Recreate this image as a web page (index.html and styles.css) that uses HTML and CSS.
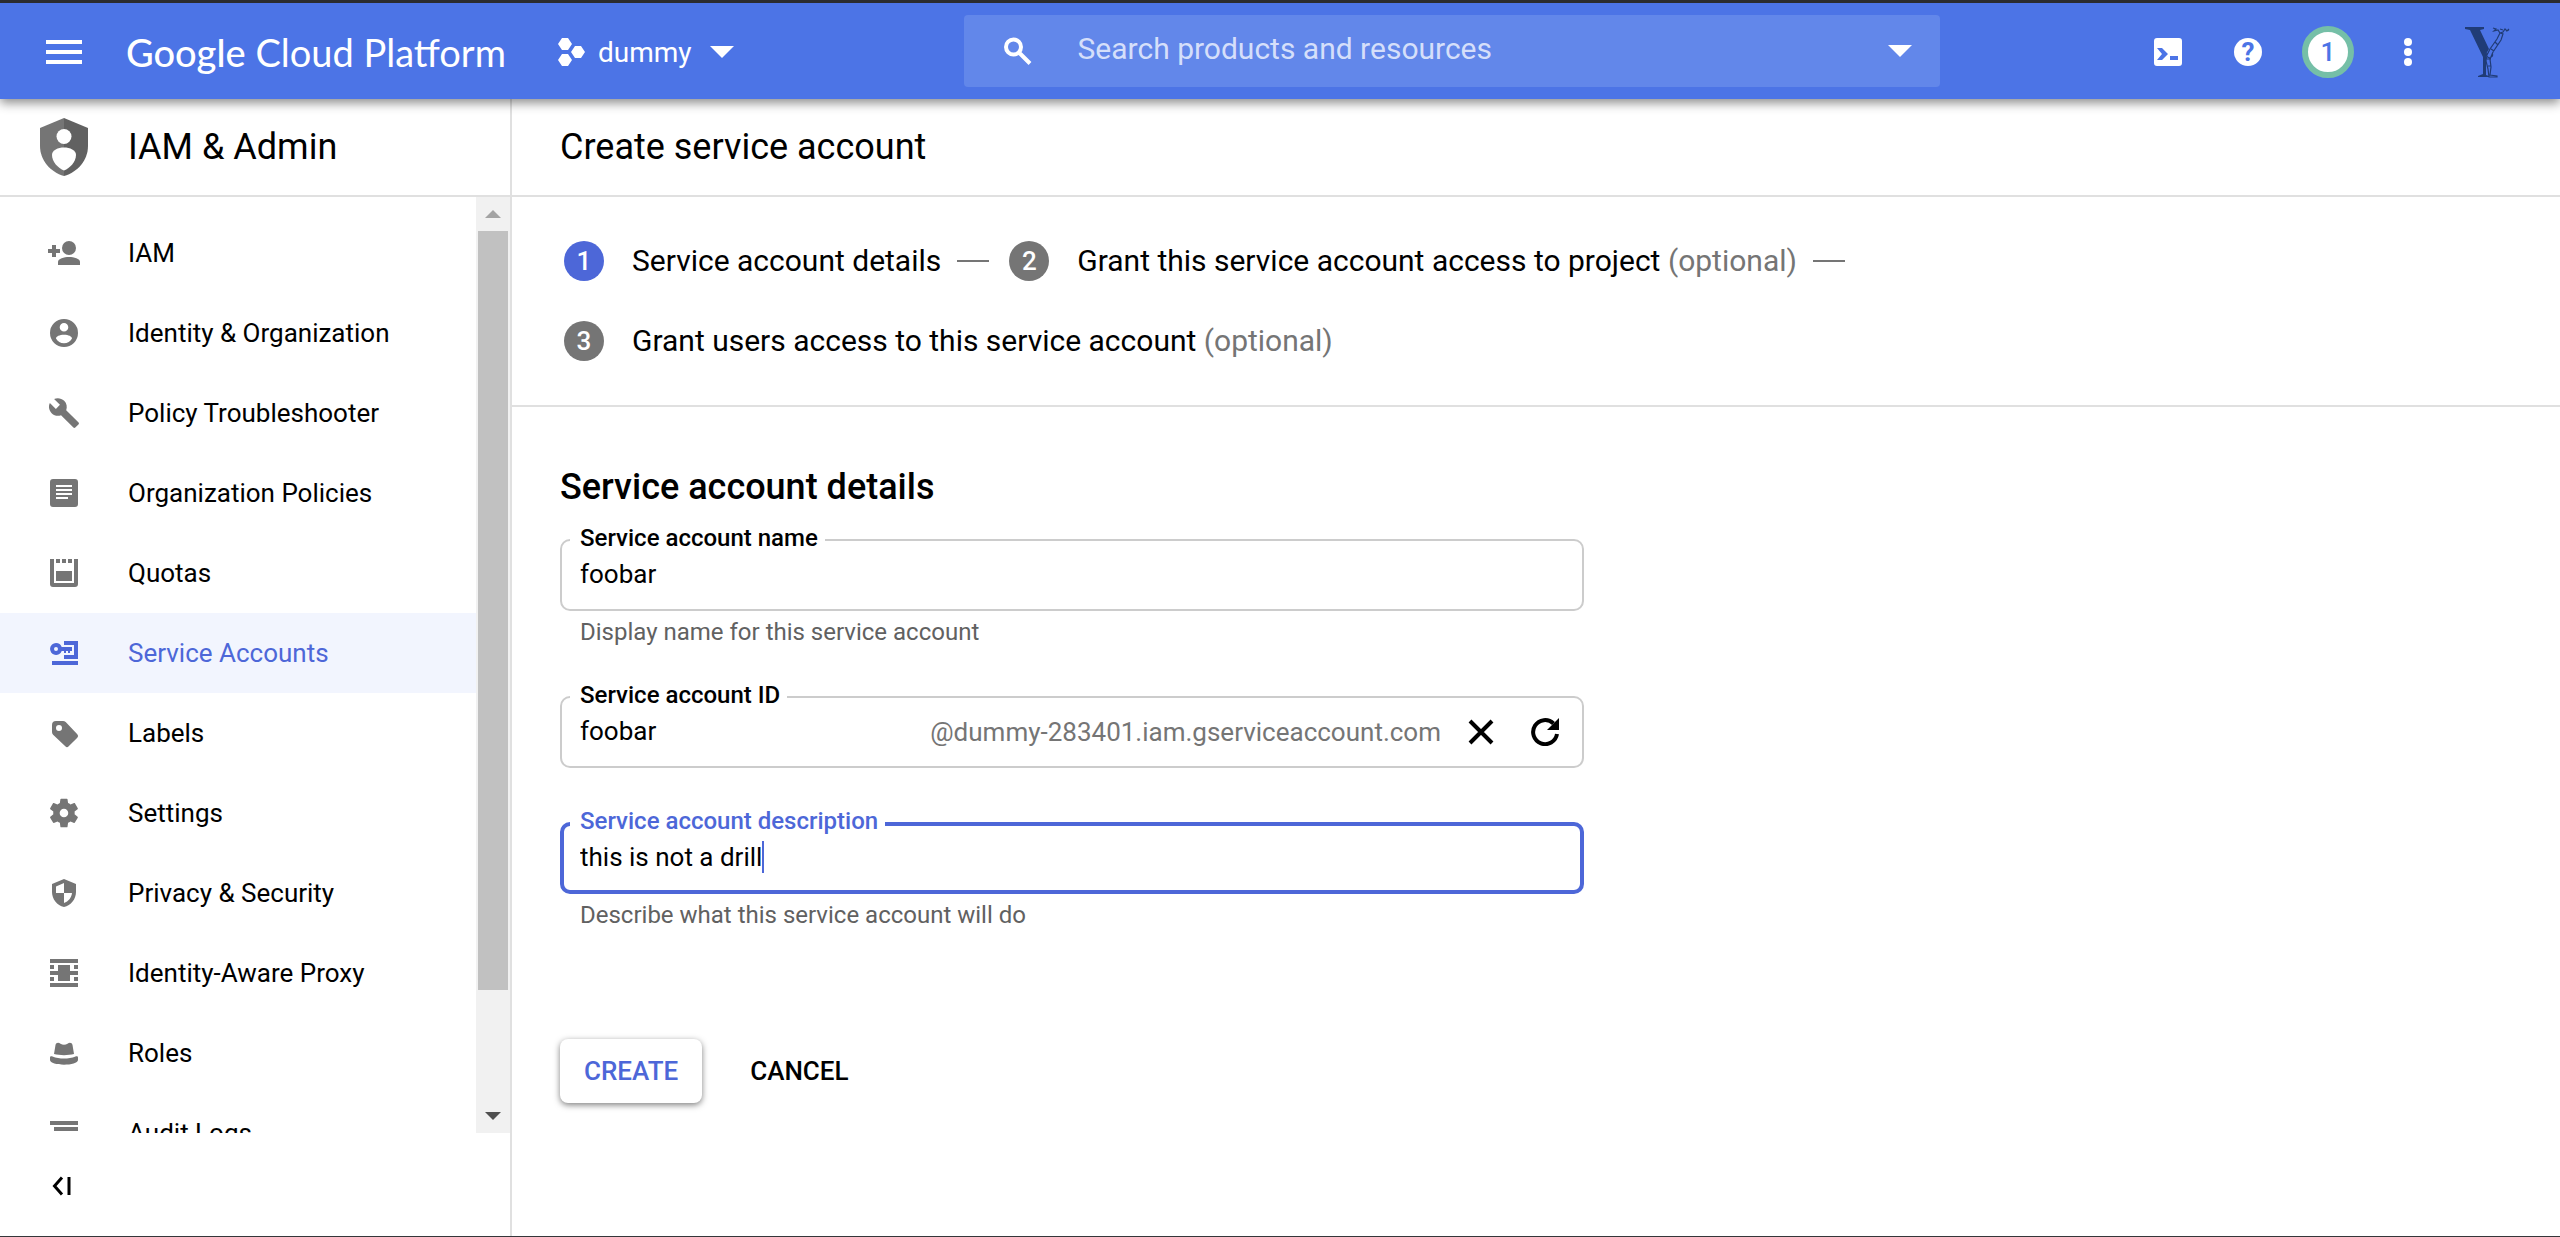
FILE: index.html
```html
<!DOCTYPE html>
<html lang="en">
<head>
<meta charset="utf-8">
<meta name="viewport" content="width=device-width, initial-scale=1">
<title>Create service account – IAM &amp; Admin</title>
<link rel="stylesheet" href="styles.css">
</head>
<body>
<header class="topbar">
  <button class="icon-button menu-button" type="button" aria-label="Main menu">
    <svg width="36" height="24" viewBox="0 0 36 24"><path d="M0 0h36v4H0zM0 10h36v4H0zM0 20h36v4H0z"/></svg>
  </button>
  <a class="brand" href="#"><span class="brand-name">Google</span> Cloud Platform</a>
  <button class="project" type="button">
    <svg width="28" height="28" viewBox="0 0 28 28"><path d="M4 0h6l4 6-4 6H4L0 6zM17 8h6l4 6-4 6h-6l-4-6zM4 16h6l4 6-4 6H4l-4-6z"/></svg>
    <span class="project-name">dummy</span>
    <svg width="24" height="12" viewBox="0 0 24 12"><path d="M0 0h24L12 12z"/></svg>
  </button>
  <form class="search" role="search">
    <svg width="28" height="28" viewBox="0 0 28 28"><path fill="none" stroke="currentColor" stroke-width="4" d="M17 10a7.500 7.500 0 1 1-15 0 7.500 7.500 0 0 1 15 0zM15 15.500l11 11"/></svg>
    <input class="search-input" type="search" aria-label="Search products and resources" placeholder="Search products and resources">
    <svg width="24" height="12" viewBox="0 0 24 12"><path d="M0 0h24L12 12z"/></svg>
  </form>
  <div class="tools">
    <button class="icon-button" type="button" aria-label="Activate Cloud Shell">
      <svg width="28" height="28" viewBox="0 0 28 28"><path fill-rule="evenodd" d="M3 0h22a3 3 0 0 1 3 3v22a3 3 0 0 1-3 3H3a3 3 0 0 1-3-3V3a3 3 0 0 1 3-3zM3 10l5 6-5 6h5l6-6-6-6zM16 18v4h8v-4z"/></svg>
    </button>
    <button class="icon-button" type="button" aria-label="Help"><span class="help">?</span></button>
    <button class="icon-button" type="button" aria-label="1 notification"><span class="count">1</span></button>
    <button class="icon-button" type="button" aria-label="More">
      <svg width="8" height="28" viewBox="0 0 8 28"><circle cx="4" cy="4" r="4"/><circle cx="4" cy="14" r="4"/><circle cx="4" cy="24" r="4"/></svg>
    </button>
    <button class="icon-button avatar" type="button" aria-label="Account">
      <svg width="48" height="52" viewBox="0 0 48 52"><path d="M1 1h19v2l-4 1 9 19-3 5v21l3 1v1H14v-1l5-2V31L6 4 1 3z"/><path fill="none" stroke="currentColor" stroke-width="1.200" d="M23 29l3-6 7-10 3-6 3 1-2 6-8 12-3 7 1 8-1 8 7 1v1h-8l-1-8-2-8zM23 27a3 3 0 1 0 5 0M29 2l3 1-2 2 4-1 2 3 3-1 2-3 2 2 2-2M36 3l3 1M42 5l3-1M31 16l3 3M27 23l3 2M23 33h4M24 40h3"/></svg>
    </button>
  </div>
</header>

<div class="shell">
  <aside class="sidebar">
    <div class="section-title">
      <svg class="section-icon" width="48" height="58" viewBox="0 0 48 58"><path fill="#757575" d="M24 0 0 10v18c0 14 10 26 24 30z"/><path fill="#616161" d="M24 0l24 10v18c0 14-10 26-24 30z"/><circle cx="24" cy="18.500" r="7.500" fill="#fff"/><path fill="#fff" d="M12 37c0-5 6-7.500 12-7.500S36 32 36 37c0 7-6 13-12 15.500C18 50 12 44 12 37z"/></svg>
      IAM &amp; Admin
    </div>
    <div class="nav-area">
      <nav class="nav" aria-label="IAM and Admin">
        <a class="nav-item" href="#"><svg class="nav-icon" viewBox="0 0 36 36"><path d="M2 14h4v-4h4v4h4v4h-4v4H6v-4H2z"/><circle cx="23" cy="13" r="7"/><path d="M12 30v-3c0-3.500 6-5 11-5s11 1.500 11 5v3z"/></svg>IAM</a>
        <a class="nav-item" href="#"><svg class="nav-icon" viewBox="0 0 36 36"><path fill-rule="evenodd" d="M18 4a14 14 0 1 1 0 28 14 14 0 0 1 0-28zm0 4a4.300 4.300 0 1 0 0 8.600A4.300 4.300 0 0 0 18 8zm0 11.800c-4.500 0-8 1.700-8 3.700 1.600 3 4.500 4.800 8 4.800s6.400-1.800 8-4.800c0-2-3.500-3.700-8-3.700z"/></svg>Identity &amp; Organization</a>
        <a class="nav-item" href="#"><svg class="nav-icon" viewBox="0 0 36 36"><path transform="translate(1.700 1.700) scale(1.360)" d="M22.700 19l-9.100-9.100c.9-2.300.4-5-1.500-6.900-2-2-5-2.400-7.400-1.300L9 6 6 9 1.600 4.700C.4 7.100.9 10.100 2.900 12.100c1.900 1.900 4.600 2.400 6.900 1.500l9.100 9.100c.4.4 1 .4 1.400 0l2.300-2.300c.5-.4.5-1.100.1-1.400z"/></svg>Policy Troubleshooter</a>
        <a class="nav-item" href="#"><svg class="nav-icon" viewBox="0 0 36 36"><path fill-rule="evenodd" d="M7 4h22a3 3 0 0 1 3 3v22a3 3 0 0 1-3 3H7a3 3 0 0 1-3-3V7a3 3 0 0 1 3-3zm3 6v2h16v-2zm0 4v2h16v-2zm0 4v2h16v-2zm0 4v2h12v-2z"/></svg>Organization Policies</a>
        <a class="nav-item" href="#"><svg class="nav-icon" viewBox="0 0 36 36"><path d="M4 4h4v24h20V4h4v25a3 3 0 0 1-3 3H7a3 3 0 0 1-3-3zM10 4h4v4h-4zM16 4h4v4h-4zM22 4h4v4h-4zM10 16h16v10H10z"/></svg>Quotas</a>
        <a class="nav-item nav-item-active" href="#" aria-current="page"><svg class="nav-icon" viewBox="0 0 36 36"><path fill-rule="evenodd" d="M10 8a6 6 0 0 1 5.700 4H26v4h-2v2h-2v-2h-2v2h-2v-2h-2.300A6 6 0 1 1 10 8zm0 4a2 2 0 1 0 0 4 2 2 0 0 0 0-4z"/><path d="M18 6h14v18H18v-4h10V10H18zM6 26h26v4H6z"/></svg>Service Accounts</a>
        <a class="nav-item" href="#"><svg class="nav-icon" viewBox="0 0 36 36"><path fill-rule="evenodd" d="M10 6h7c1 0 2 .4 2.700 1.100l11.600 12.200a2.400 2.400 0 0 1 0 3.400l-8.600 8.600a2.400 2.400 0 0 1-3.400 0L7.100 19.700A4 4 0 0 1 6 17v-7a4 4 0 0 1 4-4zm3 4a3 3 0 1 0 0 6 3 3 0 0 0 0-6z"/></svg>Labels</a>
        <a class="nav-item" href="#"><svg class="nav-icon" viewBox="0 0 36 36"><path transform="translate(.8 .8) scale(1.430)" fill-rule="evenodd" d="M19.430 12.980c.04-.32.07-.64.07-.98s-.03-.66-.07-.98l2.110-1.650c.19-.15.24-.42.12-.64l-2-3.460c-.12-.22-.39-.3-.61-.22l-2.490 1c-.52-.4-1.080-.73-1.690-.98l-.38-2.650C14.460 2.180 14.250 2 14 2h-4c-.25 0-.46.18-.49.42l-.38 2.650c-.61.25-1.170.59-1.690.98l-2.490-1c-.23-.09-.49 0-.61.22l-2 3.460c-.13.22-.07.49.12.64l2.110 1.650c-.04.32-.07.65-.07.98s.03.66.07.98l-2.110 1.650c-.19.15-.24.42-.12.64l2 3.460c.12.22.39.3.61.22l2.490-1c.52.4 1.080.73 1.690.98l.38 2.650c.03.24.24.42.49.42h4c.25 0 .46-.18.49-.42l.38-2.650c.61-.25 1.170-.59 1.690-.98l2.490 1c.23.09.49 0 .61-.22l2-3.460c.12-.22.07-.49-.12-.64zM12 9a3 3 0 1 0 0 6 3 3 0 0 0 0-6z"/></svg>Settings</a>
        <a class="nav-item" href="#"><svg class="nav-icon" viewBox="0 0 36 36"><path fill-rule="evenodd" d="M18 4l12 5v8c0 7-5 13.500-12 15C11 30.500 6 24 6 17V9zM18 8l-8 3.500V18h8zM18 18v10c4.500-1.500 7.500-5.500 8-10z"/></svg>Privacy &amp; Security</a>
        <a class="nav-item" href="#"><svg class="nav-icon" viewBox="0 0 36 36"><path d="M4 4h28v4H4zM4 28h28v4H4zM12 10h12v6h8v4h-8v6H12v-6H4v-4h8zM4 10h4v4H4zM28 10h4v4h-4zM4 22h4v4H4zM28 22h4v4h-4z"/></svg>Identity-Aware Proxy</a>
        <a class="nav-item" href="#"><svg class="nav-icon" viewBox="0 0 36 36"><path d="M8 19l1.500-9c.5-2.500 3-3 5-1.300 2 1.500 5 1.500 7 0 2-1.700 4.500-1.200 5 1.300l1.500 9c-6 1.500-14 1.500-20 0zM4 22.500c0-1 1-1.500 2.500-1 7 2.700 16 2.700 23 0 1.500-.5 2.500 0 2.500 1V25c0 3-7 4.700-14 4.700S4 28 4 25z"/></svg>Roles</a>
        <a class="nav-item" href="#"><svg class="nav-icon" viewBox="0 0 36 36"><path d="M4 6h28v4H4zM8 12h24v4H8zM4 20h28v4H4zM8 26h24v4H8z"/></svg>Audit Logs</a>
      </nav>
      <div class="scrollbar" aria-hidden="true">
        <span class="scroll-arrow"><svg width="16" height="8" viewBox="0 0 16 8"><path fill="#a3a3a3" d="M0 8h16L8 0z"/></svg></span>
        <span class="scroll-track"><span class="scroll-thumb"></span></span>
        <span class="scroll-arrow"><svg width="16" height="8" viewBox="0 0 16 8"><path fill="#505050" d="M0 0h16L8 8z"/></svg></span>
      </div>
    </div>
    <div class="sidebar-footer">
      <button class="icon-button" type="button" aria-label="Collapse menu">
        <svg width="20" height="20" viewBox="0 0 20 20"><path fill="none" stroke="currentColor" stroke-width="3" d="M10 1.500L2.500 10l7.500 8.500M17 1v18"/></svg>
      </button>
    </div>
  </aside>

  <main class="content">
    <h1 class="page-title">Create service account</h1>
    <ol class="steps">
      <li class="step step-current"><span class="step-number">1</span><span class="step-label">Service account details</span></li>
      <li class="step"><span class="step-number">2</span><span class="step-label">Grant this service account access to project <span class="optional">(optional)</span></span></li>
      <li class="step"><span class="step-number">3</span><span class="step-label">Grant users access to this service account <span class="optional">(optional)</span></span></li>
    </ol>
    <form class="details">
      <h2 class="details-title">Service account details</h2>
      <div class="field">
        <div class="control">
          <label class="field-label" for="account-name">Service account name</label>
          <input class="field-input" id="account-name" type="text" value="foobar">
        </div>
        <p class="hint">Display name for this service account</p>
      </div>
      <div class="field">
        <div class="control">
          <label class="field-label" for="account-id">Service account ID</label>
          <input class="field-input" id="account-id" type="text" value="foobar">
          <span class="suffix">@dummy-283401.iam.gserviceaccount.com</span>
          <button class="field-button" type="button" aria-label="Clear">
            <svg width="26" height="26" viewBox="0 0 26 26"><path fill="none" stroke="currentColor" stroke-width="4" d="M2 2l22 22M24 2L2 24"/></svg>
          </button>
          <button class="field-button" type="button" aria-label="Generate a new ID">
            <svg width="28" height="28" viewBox="0 0 28 28"><path fill="none" stroke="currentColor" stroke-width="4" d="M26 16a12 12 0 1 1-3.500-10.500"/><path d="M28 0v12H16z"/></svg>
          </button>
        </div>
      </div>
      <div class="field">
        <div class="control control-focused">
          <label class="field-label" for="account-description">Service account description</label>
          <input class="field-input" id="account-description" type="text" value="this is not a drill">
          <span class="caret"></span>
        </div>
        <p class="hint">Describe what this service account will do</p>
      </div>
      <div class="actions">
        <button class="button button-raised" type="submit">CREATE</button>
        <button class="button" type="button">CANCEL</button>
      </div>
    </form>
  </main>
</div>
</body>
</html>
```
FILE: styles.css
```css
:root {
  --bar: #4c74e6;
  --accent: #4d67d8;
  --line: #e0e0e0;
  --muted: #757575;
}

* {
  box-sizing: border-box;
}

body {
  display: flex;
  flex-direction: column;
  height: 100vh;
  margin: 0;
  border-top: 3px solid #2b2c2f;
  border-bottom: 1px solid #35363a;
  background: #fff;
  color: #000;
  font: 26px/32px Roboto, "Liberation Sans", sans-serif;
}

button,
input {
  border: 0;
  padding: 0;
  background: none;
  color: inherit;
  font: inherit;
  outline: 0;
}

svg {
  display: block;
  flex: none;
  fill: currentColor;
}

a {
  color: inherit;
  text-decoration: none;
}

.topbar {
  position: relative;
  z-index: 1;
  display: flex;
  flex: none;
  align-items: center;
  height: 96px;
  padding: 2px 32px 0 24px;
  background: var(--bar);
  box-shadow: 0 4px 10px rgba(0, 0, 0, .45);
  color: #fff;
}

.icon-button {
  display: flex;
  flex: none;
  align-items: center;
  justify-content: center;
  width: 80px;
  height: 80px;
}

.brand {
  margin-left: 22px;
  font: 38px/48px Lato, sans-serif;
  white-space: nowrap;
}

.brand-name {
  font-weight: 500;
}

.project {
  display: flex;
  align-items: center;
  gap: 12px;
  margin-left: 52px;
  font-size: 28px;
}

.project-name {
  margin-right: 6px;
  padding-top: 2px;
}

.search {
  display: flex;
  flex: 0 1 976px;
  align-items: center;
  height: 72px;
  margin: 0 auto 2px 230px;
  padding: 0 28px 0 40px;
  border-radius: 4px;
  background: #6287ea;
}

.search-input {
  flex: 1;
  min-width: 0;
  margin-left: 46px;
  padding-bottom: 4px;
  font-size: 30px;
}

.search-input::placeholder {
  color: #d5dffa;
  opacity: 1;
}

.tools {
  display: flex;
}

.help {
  width: 28px;
  height: 28px;
  border-radius: 50%;
  background: #fff;
  color: var(--bar);
  font-size: 26px;
  font-weight: 700;
  line-height: 28px;
}

.count {
  width: 52px;
  height: 52px;
  border: 6px solid #75bfa7;
  border-radius: 50%;
  background: #fff;
  color: var(--bar);
  font-weight: 500;
  line-height: 40px;
}

.avatar {
  color: #203c77;
}

.shell {
  display: flex;
  flex: 1;
  min-height: 0;
}

.sidebar {
  display: flex;
  flex: 0 0 512px;
  flex-direction: column;
  border-right: 2px solid var(--line);
}

.section-title,
.page-title {
  display: flex;
  flex: none;
  align-items: center;
  height: 98px;
  margin: 0;
  border-bottom: 2px solid var(--line);
  font-size: 36px;
  font-weight: 400;
}

.section-title {
  gap: 40px;
  padding-left: 40px;
}

.page-title {
  padding-left: 48px;
}

.nav-area {
  display: flex;
  flex: 1;
  min-height: 0;
}

.nav {
  flex: 1;
  padding-top: 16px;
  overflow: hidden;
}

.nav-item {
  display: flex;
  align-items: center;
  gap: 46px;
  height: 80px;
  padding-left: 46px;
}

.nav-icon {
  width: 36px;
  height: 36px;
  color: var(--muted);
}

.nav-item-active,
.nav-item-active .nav-icon {
  color: var(--accent);
}

.nav-item-active {
  background: #f2f5fe;
}

.scrollbar {
  display: flex;
  flex: 0 0 34px;
  flex-direction: column;
  background: #f1f1f1;
}

.scroll-arrow {
  display: flex;
  flex: 0 0 34px;
  align-items: center;
  justify-content: center;
}

.scroll-track {
  flex: 1;
  padding: 0 2px;
}

.scroll-thumb {
  display: block;
  height: 87.4%;
  background: #c1c1c1;
}

.sidebar-footer {
  flex: none;
  padding: 13px 0 10px 22px;
}

.content {
  flex: 1;
  min-width: 0;
  overflow: hidden;
}

.steps {
  display: flex;
  flex-wrap: wrap;
  margin: 0;
  padding: 24px 0 24px 52px;
  border-bottom: 2px solid var(--line);
  list-style: none;
}

.step {
  display: flex;
  align-items: center;
  height: 80px;
  font-size: 30px;
}

.step-number {
  width: 40px;
  height: 40px;
  margin-right: 28px;
  border-radius: 50%;
  background: var(--muted);
  color: #fff;
  font-size: 26px;
  font-weight: 500;
  line-height: 40px;
  text-align: center;
}

.step-current .step-number {
  background: var(--accent);
}

.step:not(:last-child)::after {
  width: 32px;
  height: 2px;
  margin: 0 20px 0 16px;
  background: var(--muted);
  content: "";
}

.optional {
  color: var(--muted);
}

.details {
  max-width: 1120px;
  padding: 56px 48px 0;
}

.details-title {
  margin: 0 0 28px;
  font-size: 36px;
  font-weight: 500;
  line-height: 48px;
}

.field {
  margin-bottom: 54px;
}

.control {
  position: relative;
  display: flex;
  align-items: center;
  height: 72px;
  padding: 0 5px 0 18px;
  border: 2px solid #ccc;
  border-radius: 10px;
}

.field-label {
  position: absolute;
  top: -19px;
  left: 8px;
  padding: 0 7px 0 10px;
  background: #fff;
  font-size: 24px;
  font-weight: 500;
}

.field-input {
  flex: 1;
  min-width: 0;
  padding-bottom: 2px;
}

.control-focused {
  padding-left: 16px;
  border: 4px solid var(--accent);
}

.control-focused .field-label {
  top: -21px;
  left: 6px;
  color: var(--accent);
}

.control-focused .field-input {
  flex: none;
  field-sizing: content;
}

.caret {
  width: 2px;
  height: 32px;
  margin-bottom: 2px;
  background: var(--accent);
}

.suffix {
  color: var(--muted);
}

.field-button {
  display: flex;
  align-items: center;
  justify-content: center;
  width: 64px;
  height: 64px;
}

.suffix + .field-button {
  margin-left: 8px;
}

.hint {
  margin: 11px 0 0;
  padding-left: 20px;
  color: #616161;
  font-size: 24px;
  line-height: 20px;
}

.actions {
  display: flex;
  gap: 24px;
  margin-top: 114px;
}

.button {
  height: 64px;
  padding: 0 24px;
  border-radius: 8px;
  font-weight: 500;
}

.button-raised {
  box-shadow: 0 2px 6px rgba(0, 0, 0, .5);
  color: var(--accent);
}
```
